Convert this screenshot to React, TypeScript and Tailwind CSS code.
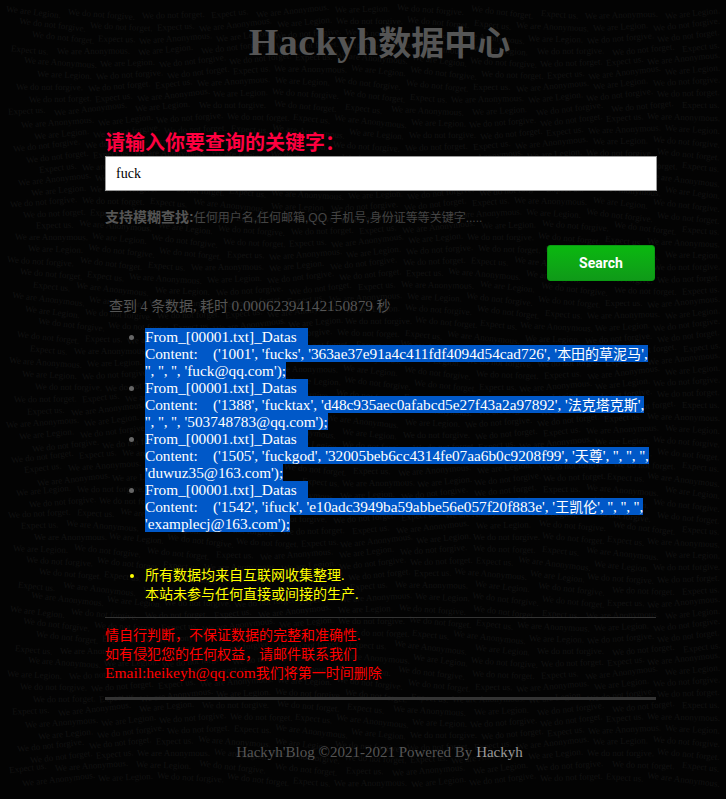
import React from 'react';

const serif = "font-['Liberation_Serif','Noto_Sans_CJK_SC',serif]";
const sans = "font-['Liberation_Sans','Noto_Sans_CJK_SC',sans-serif]";

const phrases = ['We are Legion.', 'We do not forgive.', 'We do not forget.', 'Expect us.', 'We are Anonymous.'];

// wavy wall of dim text behind the page
function Wallpaper() {
  const rows = Array.from({ length: 65 }, (_, r) => r);
  return (
    <div aria-hidden className="absolute inset-0 overflow-hidden bg-[#030303] pt-[6px] font-['Liberation_Serif',serif] text-[9px] leading-[12px] text-[#121212] select-none">
      {rows.map((r) => (
        <div key={r} className="flex h-[12px] justify-between whitespace-nowrap pr-[6px]" style={{ paddingLeft: 6 + (r * 13) % 34 }}>
          {Array.from({ length: 11 }, (_, i) => (
            <span
              key={i}
              className="inline-block"
              style={{ transform: `translateY(${Math.sin(i * 0.9 + r * 0.25) * 3}px) rotate(${Math.cos(i * 0.9 + r * 0.25) * 7}deg)` }}
            >
              {phrases[(r + i) % phrases.length]}
            </span>
          ))}
        </div>
      ))}
    </div>
  );
}

const results = [
  { a: "('1001', 'fucks', '363ae37e91a4c411fdf4094d54cad726', '", cjk: '本田的草泥马', b: "',", next: "'', '', '', 'fuck@qq.com');" },
  { a: "('1388', 'fucktax', 'd48c935aec0afabcd5e27f43a2a97892', '", cjk: '法克塔克斯', b: "',", next: "'', '', '', '503748783@qq.com');" },
  { a: "('1505', 'fuckgod', '32005beb6cc4314fe07aa6b0c9208f99', '", cjk: '天尊', b: "', '', '', '',", next: "'duwuz35@163.com');" },
  { a: "('1542', 'ifuck', 'e10adc3949ba59abbe56e057f20f883e', '", cjk: '王凯伦', b: "', '', '', '',", next: "'examplecj@163.com');" },
];

function ResultItem({ row }: { row: (typeof results)[number] }) {
  return (
    <li className="list-disc marker:text-[#666]">
      <span className="bg-[#0058c8] text-white">
        From_[00001.txt]_Datas{'\u00a0\u00a0\u00a0'}
        <br />
        Content:{'\u00a0\u00a0\u00a0\u00a0'}{row.a}
        <span className="text-[14px] leading-[10px]">{row.cjk}</span>
        {row.b}
        <br />
        {row.next}
      </span>
    </li>
  );
}

export default function App() {
  return (
    <div className={`relative h-[799px] w-full overflow-hidden ${serif}`}>
      <Wallpaper />
      <div className="relative z-10 mx-auto w-[726px]">
        <h1 className="pt-[25px] pl-[33px] text-center text-[33px] leading-[38px] font-bold text-[#555]">
          <span className="text-[38px] leading-[10px] tracking-[0.5px]">Hackyh</span>数据中心
        </h1>

        <div className="ml-[105px] w-[552px]">
          <label className={`mt-[68px] block ${sans} text-[20px] leading-[25px] font-bold text-[#ff0040]`}>
            请输入你要查询的关键字：
          </label>
          <input
            readOnly
            value="fuck"
            className="block h-[35px] w-full border border-[#999] bg-white px-[10px] text-[14px] text-black outline-none"
          />
          <p className={`mt-[18px] ${sans} text-[12px] leading-[18px] text-[#444]`}>
            <b className="text-[14px] leading-[10px] text-[#555]">支持模糊查找:</b>任何用户名,任何邮箱,QQ 手机号,身份证等等关键字.....
          </p>
          <div className="mt-[18px] mr-[2px] flex justify-end">
            <button className="h-[36px] w-[108px] rounded-[3px] border border-[#0a9a12] bg-gradient-to-b from-[#0ab80f] to-[#0f9a18] font-['Roboto',sans-serif] text-[14px] font-bold text-white">
              Search
            </button>
          </div>
          <p className="mt-[17px] ml-[4px] text-[14px] leading-[17px] text-[#555]">
            查到 4 条数据, 耗时 <span className="text-[15.3px] leading-[10px]">0.00062394142150879</span> 秒
          </p>
        </div>

        <ul className="mt-[13px] ml-[145px] w-[510px] text-[15.3px] leading-[17px]">
          {results.map((row, i) => (
            <ResultItem key={i} row={row} />
          ))}
        </ul>

        <ul className="mt-[34px] ml-[145px] w-[510px] text-[14px] leading-[19px] text-[#ffff00]">
          <li className="list-disc">
            所有数据均来自互联网收集整理.
            <br />
            本站未参与任何直接或间接的生产.
          </li>
        </ul>

        <div className="ml-[105px] w-[551px]">
          <hr className="mt-[13px] border-t border-[#333]" />
          <p className="mt-[8px] text-[14px] leading-[19px] text-[#ff0000]">
            情自行判断，不保证数据的完整和准确性.
            <br />
            如有侵犯您的任何权益，请邮件联系我们
            <br />
            <span className="text-[15.5px] leading-[10px]">Email:heikeyh@qq.com</span>我们将第一时间删除
          </p>
          <hr className="mt-[14px] border-t-[3px] border-[#333]" />
        </div>

        <footer className="mt-[42px] pl-[33px] text-center text-[15px] leading-[20px] text-[#555]">
          Hackyh'Blog ©2021-2021 Powered By <a className="text-[#999]">Hackyh</a>
        </footer>
      </div>
    </div>
  );
}
